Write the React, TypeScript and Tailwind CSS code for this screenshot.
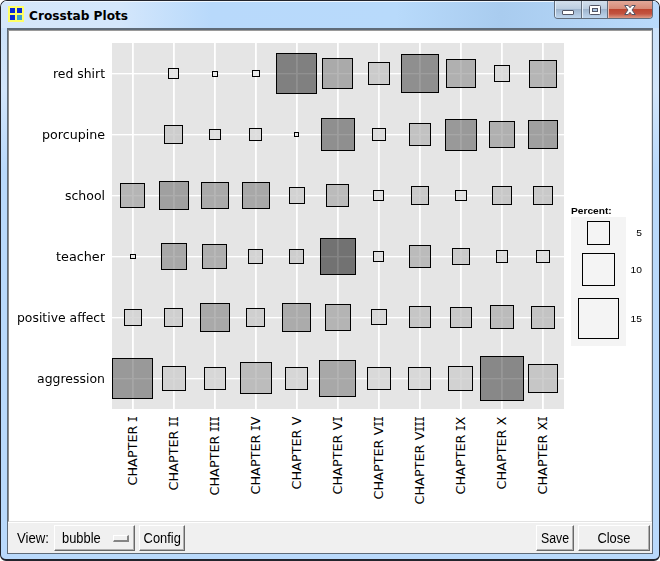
import React from "react";

type Bubble = [number, number, number, number, string];

const bubbles: Bubble[] = [
  [168, 68, 11, 11, "#e4e4e4"], [212, 71, 6, 6, "#e9e9e9"], [252, 70, 8, 7, "#e9e9e9"], [276, 53, 41, 41, "#808080"],
  [322, 58, 31, 31, "#aaaaaa"], [368, 62, 22, 23, "#cbcbcb"], [401, 54, 38, 39, "#8f8f8f"], [446, 59, 30, 29, "#b0b0b0"],
  [494, 65, 16, 17, "#dadada"], [529, 60, 28, 28, "#b5b5b5"],

  [164, 125, 19, 19, "#cdcdcd"], [209, 129, 12, 11, "#dedede"], [249, 128, 13, 13, "#dcdcdc"], [294, 132, 5, 5, "#e9e9e9"],
  [321, 118, 34, 33, "#8f8f8f"], [372, 128, 14, 13, "#dcdcdc"], [409, 123, 22, 23, "#c2c2c2"], [445, 119, 32, 32, "#999999"],
  [489, 121, 26, 27, "#b0b0b0"], [528, 120, 30, 29, "#a0a0a0"],

  [120, 183, 25, 25, "#b5b5b5"], [159, 181, 30, 29, "#a0a0a0"], [201, 182, 28, 27, "#aaaaaa"], [242, 182, 28, 27, "#a8a8a8"],
  [289, 187, 16, 17, "#d2d2d2"], [326, 184, 23, 23, "#bbbbbb"], [373, 190, 11, 11, "#dfdfdf"], [411, 186, 18, 19, "#c9c9c9"],
  [455, 190, 12, 11, "#dfdfdf"], [492, 186, 20, 19, "#c8c8c8"], [533, 186, 20, 19, "#c9c9c9"],

  [130, 254, 6, 5, "#e9e9e9"], [161, 243, 26, 27, "#a8a8a8"], [202, 244, 25, 25, "#afafaf"], [248, 249, 15, 15, "#d3d3d3"],
  [289, 249, 15, 15, "#cdcdcd"], [320, 238, 36, 37, "#727272"], [373, 251, 11, 11, "#dfdfdf"], [409, 245, 22, 23, "#bbbbbb"],
  [452, 248, 18, 17, "#cacaca"], [496, 250, 12, 13, "#dadada"], [536, 250, 14, 13, "#dcdcdc"],

  [124, 309, 18, 17, "#d5d5d5"], [164, 308, 19, 19, "#cfcfcf"], [200, 303, 30, 29, "#a9a9a9"], [246, 308, 19, 19, "#cfcfcf"],
  [282, 303, 29, 29, "#ababab"], [325, 304, 26, 27, "#b4b4b4"], [371, 309, 16, 16, "#d8d8d8"], [409, 306, 22, 22, "#c6c6c6"],
  [450, 307, 22, 21, "#c8c8c8"], [490, 305, 24, 24, "#bbbbbb"], [531, 306, 24, 23, "#c3c3c3"],

  [112, 358, 41, 41, "#999999"], [162, 366, 24, 25, "#d2d2d2"], [204, 367, 22, 23, "#d7d7d7"], [240, 362, 32, 32, "#bcbcbc"],
  [285, 367, 23, 23, "#d6d6d6"], [319, 360, 37, 37, "#a8a8a8"], [367, 367, 24, 23, "#d9d9d9"], [408, 367, 23, 23, "#d8d8d8"],
  [448, 366, 25, 25, "#d2d2d2"], [480, 356, 44, 45, "#888888"], [528, 364, 30, 29, "#c6c6c6"],
];

const rows: [string, number, number][] = [
  ["red shirt", 73, 52], ["porcupine", 134, 63], ["school", 195, 40],
  ["teacher", 256, 49], ["positive affect", 317, 88], ["aggression", 378, 68],
];

const cols: [string, number, number][] = [
  ["I", 132, 69], ["II", 173, 74], ["III", 214, 79], ["IV", 255, 78], ["V", 296, 73], ["VI", 337, 78],
  ["VII", 378, 83], ["VIII", 419, 88], ["IX", 460, 78], ["X", 501, 73], ["XI", 542, 78],
];

function GridLines({ opacity }: { opacity: number }) {
  return (
    <g opacity={opacity} shapeRendering="crispEdges" fill="#ffffff">
      {cols.map(([n, x]) => (
        <g key={n}>
          <rect x={x} y={43} width={1} height={366} />
          <rect x={x + 1} y={43} width={1} height={366} opacity={0.8} />
        </g>
      ))}
      {rows.map(([n, y]) => (
        <g key={n}>
          <rect x={112} y={y} width={452} height={1} />
          <rect x={112} y={y + 1} width={452} height={1} opacity={0.35} />
        </g>
      ))}
    </g>
  );
}

// Roman numeral set glyph by glyph, with a narrow serifed I.
function Numeral({ value, start }: { value: string; start: number }) {
  let x = start;
  return (
    <>
      {value.split("").map((ch, i) => {
        const at = x;
        x += ch === "I" ? 5 : 9;
        return ch === "I" ? (
          <text key={i} x={at - 0.9} fontFamily="DejaVu Sans Mono" textLength={6.4} lengthAdjust="spacingAndGlyphs">I</text>
        ) : (
          <text key={i} x={at}>{ch}</text>
        );
      })}
    </>
  );
}

function Plot() {
  return (
    <svg width="556" height="490" viewBox="10 31 556 490" className="block shrink-0">
      <rect x="112" y="43" width="452" height="366" fill="#e5e5e5" shapeRendering="crispEdges" />
      <GridLines opacity={1} />
      {bubbles.map(([x, y, w, h, c], i) => (
        <rect key={i} x={x} y={y} width={w} height={h} fill={c} shapeRendering="crispEdges" />
      ))}
      <GridLines opacity={0.13} />
      {bubbles.map(([x, y, w, h], i) => (
        <rect key={i} x={x + 0.5} y={y + 0.5} width={w - 1} height={h - 1} fill="none" stroke="#000" shapeRendering="crispEdges" />
      ))}
      <g fontSize="13" fill="#000" style={{ fontFamily: '"DejaVu Sans", Verdana, sans-serif' }}>
        {rows.map(([name, y, len]) => (
          <text key={name} x={105 - len} y={y + 5} textLength={len} lengthAdjust="spacingAndGlyphs">
            {name}
          </text>
        ))}
        {cols.map(([name, x, len]) => (
          <g key={name} transform={`translate(${x + 5} ${416.5 + len}) rotate(-90)`} fontSize="12.5">
            <text x="0" textLength="60" lengthAdjust="spacingAndGlyphs">CHAPTER</text>
            <Numeral value={name} start={64.2} />
          </g>
        ))}
      </g>
    </svg>
  );
}

function Legend() {
  return (
    <div className="flex w-[76px] flex-col pt-[173px] pl-[5px] text-[9.5px] text-black">
      <div className="h-[13px] leading-[14px] font-bold whitespace-nowrap">
        <span className="inline-block origin-left scale-x-[1.07]">Percent:</span>
      </div>
      <div className="flex">
        <div className="flex h-[129px] w-[55px] flex-col items-center bg-[#f4f4f4] pt-1">
          <div className="h-6 w-[23px] border border-black" />
          <div className="mt-2 h-[33px] w-[33px] border border-black" />
          <div className="mt-3 h-[41px] w-[41px] border border-black" />
        </div>
        <div className="flex w-4 origin-right scale-x-[1.08] flex-col pt-[9px] text-right leading-[14px]">
          <span>5</span>
          <span className="mt-[23px]">10</span>
          <span className="mt-[35px]">15</span>
        </div>
      </div>
    </div>
  );
}

function Button({ className, children }: { className: string; children: React.ReactNode }) {
  return (
    <div className={`flex h-[26px] items-center border-t border-l border-r border-b border-t-white border-l-white border-r-[#696969] border-b-[#696969] bg-[#f0f0f0] shadow-[inset_-1px_-1px_0_#b0b0b0] ${className}`}>
      {children}
    </div>
  );
}

function TitleBar() {
  return (
    <div className="flex h-[27px] items-start bg-[linear-gradient(90deg,#d5e7fa_0%,#d4e7fc_18%,#b8d9fb_32%,#b8dafb_60%,#a9ccef_76%,#b9dafb_100%)] pl-[7px] shadow-[inset_0_1px_0_#eef6fe]">
      <svg width="16" height="16" viewBox="0 0 16 16" className="mt-[5px] shrink-0" shapeRendering="crispEdges">
        <rect width="16" height="16" fill="#ffff66" />
        <rect x="2" y="2" width="5" height="5" fill="#0a28d2" />
        <rect x="9" y="2" width="5" height="5" fill="#0a28d2" />
        <rect x="2" y="9" width="5" height="5" fill="#0a28d2" />
        <rect x="9" y="9" width="5" height="5" fill="#3c9ed0" />
      </svg>
      <div className="mt-[5px] ml-[5px] text-[13px] leading-5 font-bold text-black" style={{ fontFamily: '"DejaVu Sans", sans-serif' }}>
        <svg width="110" height="20" className="block">
          <text x="0" y="14" fontSize="13" textLength="99" lengthAdjust="spacingAndGlyphs">Crosstab Plots</text>
        </svg>
      </div>
      <div className="mr-[6px] ml-auto flex h-[18px] w-[99px] overflow-hidden rounded-b-[4px] border border-t-0 border-[#626d7c]">
        <div className="flex w-[27px] justify-center border-r border-[#626d7c] bg-[linear-gradient(#d3dfec_0%,#bccee1_45%,#9fb5ce_50%,#bed5ed_100%)] shadow-[inset_1px_0_0_#e4eef9]">
          <div className="mt-[9px] h-[5px] w-3 rounded-[1px] border border-[#535666] bg-white" />
        </div>
        <div className="flex w-[26px] justify-center border-r border-[#626d7c] bg-[linear-gradient(#d3dfec_0%,#bccee1_45%,#9fb5ce_50%,#bed5ed_100%)] shadow-[inset_1px_0_0_#e4eef9]">
          <svg width="12" height="10" viewBox="0 0 12 10" className="mt-1">
            <rect x=".5" y=".5" width="11" height="9" rx="1" fill="#fff" stroke="#535666" />
            <rect x="3.5" y="3.5" width="5" height="3" fill="#a9c4e1" stroke="#535666" />
          </svg>
        </div>
        <div className="flex flex-1 justify-center bg-[linear-gradient(#e2a899_0%,#d78b78_45%,#bd4631_50%,#c25340_75%,#dc9985_100%)] shadow-[inset_1px_0_0_#efbdb0]">
          <svg width="12" height="10" viewBox="0 0 12 10" className="mt-1">
            <path d="M.7.5h3.5L6 2.7 7.8.5h3.5L8 5l3.3 4.5H7.8L6 7.3 4.2 9.5H.7L4 5Z" fill="#fff" stroke="#535666" />
          </svg>
        </div>
      </div>
    </div>
  );
}

export default function App() {
  return (
    <div className="h-[561px] w-[660px] bg-white" style={{ fontFamily: '"Liberation Sans", Arial, sans-serif' }}>
      <div className="h-full rounded-t-[7px] rounded-b-[6px] border border-b-2 border-[#22242c] bg-[linear-gradient(#c9e0f9_0px,#d2e5fa_90px,#b9d9fb_170px,#b9d9fb_100%)] overflow-hidden">
        <TitleBar />
        <div className="mx-[6px] flex h-[526px] flex-col border border-[#5f6b78] border-t-2 bg-[#f0f0f0]">
          <div className="flex h-[492px] border-t border-l border-r border-b border-t-[#9a9a9a] border-l-[#8c8c8c] border-r-[#e3e3e3] border-b-[#e3e3e3] bg-white pl-px">
            <Plot />
            <Legend />
          </div>
          <div className="flex h-[31px] items-center border-t border-white pl-[9px] text-[14px] text-black">
            <span className="w-[37px] origin-left scale-x-[.94] whitespace-nowrap">View:</span>
            <Button className="w-[81px] pl-[7px]">
              <span className="origin-left scale-x-[.92]">bubble</span>
              <span className="mr-[5px] ml-auto h-[7px] w-[16px] border border-r-2 border-b-2 border-t-white border-l-white border-r-[#858585] border-b-[#858585] bg-[#f0f0f0]" />
            </Button>
            <Button className="ml-1 w-[46px] justify-center">
              <span className="scale-x-[.92]">Config</span>
            </Button>
            <Button className="ml-auto w-[38px] justify-center">
              <span className="scale-x-[.88]">Save</span>
            </Button>
            <Button className="mr-[2px] ml-1 w-[72px] justify-center">
              <span className="scale-x-[.92]">Close</span>
            </Button>
          </div>
        </div>
      </div>
    </div>
  );
}
